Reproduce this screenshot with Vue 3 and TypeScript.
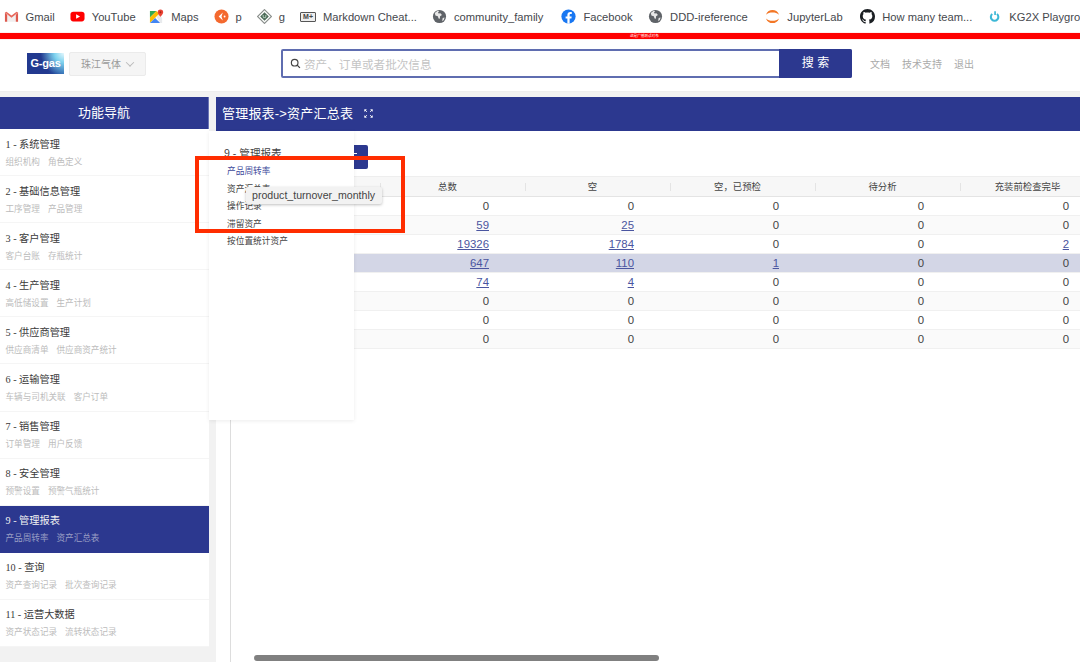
<script setup lang="ts">
interface Bookmark {
  label: string;
  icon: string;
}

interface NavItem {
  title: string;
  subs: string[];
  active?: boolean;
}

type Cell = number | { link: number };

const bookmarks: Bookmark[] = [
  { label: 'Gmail', icon: 'gmail' },
  { label: 'YouTube', icon: 'youtube' },
  { label: 'Maps', icon: 'maps' },
  { label: 'p', icon: 'orange' },
  { label: 'g', icon: 'diamond' },
  { label: 'Markdown Cheat...', icon: 'markdown' },
  { label: 'community_family', icon: 'globe' },
  { label: 'Facebook', icon: 'facebook' },
  { label: 'DDD-ireference', icon: 'globe' },
  { label: 'JupyterLab', icon: 'jupyter' },
  { label: 'How many team...', icon: 'github' },
  { label: 'KG2X Playground', icon: 'ring' }
];

const navItems: NavItem[] = [
  { title: '1 - 系统管理', subs: ['组织机构', '角色定义'] },
  { title: '2 - 基础信息管理', subs: ['工序管理', '产品管理'] },
  { title: '3 - 客户管理', subs: ['客户台账', '存瓶统计'] },
  { title: '4 - 生产管理', subs: ['高低储设置', '生产计划'] },
  { title: '5 - 供应商管理', subs: ['供应商清单', '供应商资产统计'] },
  { title: '6 - 运输管理', subs: ['车辆与司机关联', '客户订单'] },
  { title: '7 - 销售管理', subs: ['订单管理', '用户反馈'] },
  { title: '8 - 安全管理', subs: ['预警设置', '预警气瓶统计'] },
  { title: '9 - 管理报表', subs: ['产品周转率', '资产汇总表'], active: true },
  { title: '10 - 查询', subs: ['资产查询记录', '批次查询记录'] },
  { title: '11 - 运营大数据', subs: ['资产状态记录', '流转状态记录'] }
];

const popupLinks = ['产品周转率', '资产汇总表', '操作记录', '滞留资产', '按位置统计资产'];

const columns = ['总数', '空', '空，已预检', '待分析', '充装前检查完毕'];

const rows: Cell[][] = [
  [0, 0, 0, 0, 0],
  [{ link: 59 }, { link: 25 }, 0, 0, 0],
  [{ link: 19326 }, { link: 1784 }, 0, 0, { link: 2 }],
  [{ link: 647 }, { link: 110 }, { link: 1 }, 0, 0],
  [{ link: 74 }, { link: 4 }, 0, 0, 0],
  [0, 0, 0, 0, 0],
  [0, 0, 0, 0, 0],
  [0, 0, 0, 0, 0]
];

const isLink = (cell: Cell): cell is { link: number } => typeof cell !== 'number';
</script>

<template>
  <div class="page">
    <div class="bookmarks">
      <div v-for="b in bookmarks" :key="b.label" class="bookmark">
        <svg v-if="b.icon === 'gmail'" class="bm-icon" viewBox="0 0 16 16">
          <path d="M3.400 5.200 8 9l4.600-3.800v8.300H3.400z" fill="#f1eeee" />
          <path d="M1 3.800v9.700h2.400V6.200z" fill="#dd5a4e" />
          <path d="M15 3.800v9.700h-2.400V6.200z" fill="#dd5a4e" />
          <path d="M1 3.800 2.600 2.800 8 7l5.400-4.200 1.600 1L8 9.400z" fill="#e8695d" />
        </svg>
        <svg v-else-if="b.icon === 'youtube'" class="bm-icon" viewBox="0 0 16 16">
          <rect x="0.500" y="2.800" width="15" height="10.400" rx="3" fill="#f00" />
          <path d="M6.500 5.600v4.800L10.700 8z" fill="#fff" />
        </svg>
        <svg v-else-if="b.icon === 'maps'" class="bm-icon" viewBox="0 0 16 16">
          <path d="M1 2h7L1 9z" fill="#34a853" />
          <path d="M1 9 8 2l3 3-10 10z" fill="#fbbc04" />
          <path d="M1 15 6.500 9.500 12 15z" fill="#4285f4" />
          <path d="M8 8.500 12 15h2V9.500L11 5z" fill="#e8eaed" />
          <path d="M12.200.5a2.900 2.900 0 0 0-2.900 2.900c0 2 2.900 4.800 2.900 4.800s2.900-2.800 2.900-4.800A2.900 2.900 0 0 0 12.200.5z" fill="#ea4335" />
          <circle cx="12.200" cy="3.400" r="1" fill="#a52714" />
        </svg>
        <svg v-else-if="b.icon === 'orange'" class="bm-icon" viewBox="0 0 16 16">
          <circle cx="8" cy="8" r="7.500" fill="#f4692f" />
          <path d="M9.400 3.800 5 8l4.400 4.200L8 8z" fill="#fff" />
          <circle cx="11.300" cy="8" r="1" fill="#fff" />
        </svg>
        <svg v-else-if="b.icon === 'diamond'" class="bm-icon" viewBox="0 0 16 16">
          <path d="M8 .6 15.400 8 8 15.400.6 8z" fill="#fff" stroke="#8a8f8c" stroke-width="1.200" />
          <path d="M8 3.400 12.600 8 8 12.600 3.400 8z" fill="#4d6a58" />
          <circle cx="6.600" cy="7.400" r="0.800" fill="#cfe6d6" />
          <circle cx="9.400" cy="7.400" r="0.800" fill="#cfe6d6" />
          <path d="M6.400 9.200h3.200" stroke="#cfe6d6" stroke-width="0.800" />
        </svg>
        <span v-else-if="b.icon === 'markdown'" class="bm-md">M+</span>
        <svg v-else-if="b.icon === 'globe'" class="bm-icon" viewBox="0 0 16 16">
          <circle cx="8" cy="8" r="7" fill="#5f6368" />
          <path d="M6 1.800 3 4.200l.6 2.600 2.600 1 .8 2.400 1.400.2.2-2.600 2-1.400-1.600-1.800-2 .2-.6-1.200 1.400-.8z" fill="#e8e8e8" />
          <path d="M11.400 9.600 13.400 9l-.8 2.800-1.800 1.200z" fill="#e8e8e8" />
        </svg>
        <svg v-else-if="b.icon === 'facebook'" class="bm-icon" viewBox="0 0 16 16">
          <circle cx="8" cy="8" r="7.600" fill="#1877f2" />
          <path d="M9.200 15.600v-5.400h1.900l.3-2.300H9.200V6.500c0-.7.3-1.200 1.200-1.200h1.100v-2a12 12 0 0 0-1.700-.1c-1.800 0-3 1.100-3 3.100v1.600H4.900v2.300h1.900v5.400z" fill="#fff" />
        </svg>
        <svg v-else-if="b.icon === 'jupyter'" class="bm-icon" viewBox="0 0 16 16">
          <path d="M1 6C2.400 2.400 5 1 8 1s5.600 1.400 7 5C13.200 4.200 10.800 3.600 8 3.600S2.800 4.200 1 6z" fill="#f37726" />
          <path d="M1 10c1.400 3.600 4 5 7 5s5.600-1.400 7-5c-1.800 1.800-4.200 2.400-7 2.400S2.800 11.800 1 10z" fill="#f37726" />
        </svg>
        <svg v-else-if="b.icon === 'github'" class="bm-icon" viewBox="0 0 16 16">
          <path d="M8 0C3.580 0 0 3.580 0 8c0 3.540 2.290 6.530 5.470 7.590.4.070.55-.17.55-.38 0-.19-.01-.82-.01-1.490-2.010.37-2.530-.49-2.690-.94-.09-.23-.48-.94-.82-1.130-.28-.15-.68-.52-.01-.53.63-.01 1.080.58 1.230.82.72 1.210 1.870.87 2.330.66.07-.52.28-.87.51-1.070-1.780-.2-3.640-.89-3.640-3.950 0-.87.31-1.590.82-2.150-.08-.2-.36-1.020.08-2.120 0 0 .67-.21 2.200.82.64-.18 1.320-.27 2-.27.68 0 1.360.09 2 .27 1.530-1.040 2.200-.82 2.200-.82.44 1.100.16 1.920.08 2.120.51.56.82 1.270.82 2.150 0 3.070-1.870 3.750-3.650 3.950.29.25.54.73.54 1.480 0 1.070-.01 1.930-.01 2.200 0 .21.15.46.55.38A8.013 8.013 0 0016 8c0-4.420-3.580-8-8-8z" fill="#1b1f23" />
        </svg>
        <svg v-else class="bm-icon" viewBox="0 0 16 16">
          <path d="M5.600 5.400a4 4 0 1 0 5 0" fill="none" stroke="#3db8d6" stroke-width="2.200" />
          <path d="M8.600 2.500v4" stroke="#3db8d6" stroke-width="1.800" />
        </svg>
        <span>{{ b.label }}</span>
      </div>
    </div>

    <div class="notice"><span>这是广播测试对象</span></div>

    <header class="topbar">
      <div class="logo">G-gas</div>
      <div class="company">珠江气体<span class="chevron"></span></div>
      <div class="search">
        <div class="search-field">
          <svg class="search-icon" viewBox="0 0 16 16">
            <circle cx="6.800" cy="6.800" r="4.800" fill="none" stroke="#444" stroke-width="1.700" />
            <path d="m10.400 10.400 4 4" stroke="#444" stroke-width="1.900" />
          </svg>
          <span>资产、订单或者批次信息</span>
        </div>
        <div class="search-btn">搜 索</div>
      </div>
      <nav class="toplinks">
        <span>文档</span>
        <span>技术支持</span>
        <span>退出</span>
      </nav>
    </header>

    <div class="workspace">
      <aside class="sidebar">
        <div class="side-head">功能导航</div>
        <div v-for="item in navItems" :key="item.title" class="nav-item" :class="{ active: item.active }">
          <div class="nav-title">{{ item.title }}</div>
          <div class="nav-subs">
            <span v-for="s in item.subs" :key="s">{{ s }}</span>
          </div>
        </div>
      </aside>

      <main class="main">
        <div class="main-head">
          <span>管理报表-&gt;资产汇总表</span>
          <svg class="expand" viewBox="0 0 10 10">
            <path d="M.8 2.800V.8h2M.8.8l2.400 2.400M9.200 2.800V.8h-2M9.200.8 6.800 3.200M.8 7.200v2h2M.8 9.200l2.400-2.400M9.200 7.200v2h-2M9.200 9.200 6.800 6.800" fill="none" stroke="#fff" stroke-width="1" />
          </svg>
        </div>
        <div class="main-body">
          <div class="toolbar">
            <div class="tool-btn"><i></i></div>
          </div>
          <table class="report">
            <colgroup>
              <col class="col-first" />
              <col v-for="c in columns" :key="c" class="col-data" />
            </colgroup>
            <thead>
              <tr>
                <th></th>
                <th v-for="c in columns" :key="c">{{ c }}</th>
              </tr>
            </thead>
            <tbody>
              <tr v-for="(row, i) in rows" :key="i" :class="{ hover: i === 3 }">
                <td></td>
                <td v-for="(cell, j) in row" :key="j">
                  <a v-if="isLink(cell)">{{ cell.link }}</a>
                  <template v-else>{{ cell }}</template>
                </td>
              </tr>
            </tbody>
          </table>
          <div class="scrollbar"></div>
        </div>
      </main>

      <div class="popup">
        <div class="popup-title">9 - 管理报表</div>
        <div v-for="(l, i) in popupLinks" :key="l" class="popup-link" :class="{ current: i === 0 }">{{ l }}</div>
      </div>
      <div class="annotation"></div>
      <div class="tooltip">product_turnover_monthly</div>
    </div>
  </div>
</template>

<style scoped>
.page {
  width: 1080px;
  height: 662px;
  overflow: hidden;
  display: flex;
  flex-direction: column;
  font-family: "Liberation Sans", "Noto Sans CJK SC", sans-serif;
  color: #444;
}

.bookmarks {
  height: 33px;
  flex: none;
  display: flex;
  align-items: center;
  gap: 15px;
  padding-left: 3.5px;
  background: #fff;
  font-size: 11.2px;
  color: #45484d;
  white-space: nowrap;
  overflow: hidden;
}

.bookmark {
  display: flex;
  align-items: center;
  gap: 7px;
  flex: none;
}

.bookmark:nth-child(3) {
  margin-left: -1.5px;
}

.bookmark:nth-child(8) {
  margin-left: 3px;
}

.bookmark:nth-child(9) {
  margin-left: 0.5px;
}

.bookmark:nth-child(10),
.bookmark:nth-child(11) {
  margin-left: 2.5px;
}

.bm-icon {
  width: 15px;
  height: 15px;
  flex: none;
}

.bm-md {
  width: 14px;
  height: 8px;
  border: 1px solid #555;
  background: #eee;
  border-radius: 1px;
  font-size: 7px;
  font-weight: 700;
  line-height: 8px;
  text-align: center;
  box-sizing: content-box;
  color: #444;
}

.notice {
  height: 6px;
  flex: none;
  background: #f00;
  position: relative;
  box-shadow: 0 0 1px #f99;
}

.notice span {
  position: absolute;
  left: 630px;
  top: 0;
  font-size: 3.6px;
  line-height: 6px;
  color: #fff;
  white-space: nowrap;
}

.topbar {
  height: 53px;
  flex: none;
  display: flex;
  align-items: center;
  background: #fff;
  border-bottom: 1px solid #eee;
  padding: 0 0 3px 27px;
  box-sizing: border-box;
}

.logo {
  width: 37px;
  height: 21px;
  background:
    radial-gradient(circle at 100% 0, #e8f8fd 0, #7fd3ef 22%, rgba(47, 127, 196, 0) 55%),
    linear-gradient(90deg, #22398f 55%, #2a62ae);
  color: #fff;
  font-size: 11px;
  font-weight: 700;
  line-height: 20px;
  text-align: center;
  white-space: nowrap;
  letter-spacing: -0.2px;
}

.company {
  width: 77px;
  height: 24px;
  margin-left: 5px;
  display: flex;
  align-items: center;
  gap: 6px;
  padding-left: 11px;
  box-sizing: border-box;
  background: #f5f5f5;
  border: 1px solid #ebebeb;
  border-radius: 2px;
  font-size: 10px;
  color: #9a9a9a;
}

.chevron {
  width: 5px;
  height: 5px;
  border-right: 1px solid #bbb;
  border-bottom: 1px solid #bbb;
  transform: rotate(45deg) translate(-1px, -1px);
}

.search {
  width: 571px;
  height: 29px;
  margin-left: 135px;
  display: flex;
  box-sizing: border-box;
  border: 2px solid #5f6db0;
  border-radius: 2px;
}

.search-field {
  flex: 1;
  display: flex;
  align-items: center;
  gap: 3px;
  padding-left: 7px;
  font-size: 11.6px;
  color: #c4c4c4;
}

.search-icon {
  width: 11px;
  height: 11px;
}

.search-btn {
  width: 73px;
  margin: -2px -2px -2px 0;
  background: #2c388f;
  color: #fff;
  font-size: 12px;
  line-height: 29px;
  text-align: center;
  border-radius: 0 2px 2px 0;
}

.toplinks {
  display: flex;
  gap: 12px;
  margin-left: 18px;
  font-size: 10px;
  color: #aaa;
}

.workspace {
  position: relative;
  flex: 1;
  min-height: 0;
  display: flex;
  align-items: flex-start;
  gap: 7px;
  padding-top: 5px;
}

.sidebar {
  width: 209px;
  flex: none;
  background: #fff;
}

.side-head {
  height: 32px;
  background: #2c388f;
  color: #fff;
  font-size: 13px;
  line-height: 32px;
  text-align: center;
  border-right: 1px solid #6a74b4;
  box-sizing: border-box;
}

.nav-item {
  height: 47.1px;
  box-sizing: border-box;
  padding: 7.5px 5.5px 0;
  border-bottom: 1px solid #f5f5f5;
}

.nav-title {
  font-family: "Liberation Serif", "Noto Sans CJK SC", serif;
  font-size: 10.2px;
  line-height: 15px;
  color: #3a3a3a;
}

.nav-subs {
  display: flex;
  gap: 8px;
  margin-top: 3px;
  font-size: 8.6px;
  line-height: 14px;
  color: #bcbcbc;
}

.nav-item.active {
  background: #2c388f;
  border-bottom: 0;
}

.nav-item.active .nav-title {
  color: #f2f2f2;
}

.nav-item.active .nav-subs {
  color: #9a9fc4;
}

.main {
  flex: 1;
  min-width: 0;
  height: 565px;
  background: #fff;
  overflow: hidden;
}

.main-head {
  height: 34px;
  display: flex;
  align-items: center;
  gap: 11px;
  padding: 0 0 3px 6px;
  box-sizing: border-box;
  background: #2c388f;
  color: #fff;
  font-size: 13px;
  letter-spacing: 0.2px;
}

.expand {
  width: 9px;
  height: 9px;
  margin-top: 1px;
}

.main-body {
  position: relative;
  height: 531px;
  margin-left: 14px;
  border-left: 1px solid #ddd;
}

.toolbar {
  height: 45px;
  padding-top: 14px;
  box-sizing: border-box;
}

.tool-btn {
  position: relative;
  width: 68px;
  height: 24px;
  margin-left: 69px;
  background: #2c388f;
  border-radius: 2px;
}

.tool-btn i {
  position: absolute;
  right: 11px;
  top: 8px;
  width: 5px;
  height: 1px;
  background: #fff;
}

.report {
  width: 873px;
  border-collapse: collapse;
  table-layout: fixed;
  font-size: 11.4px;
}

.col-first {
  width: 148px;
}

.col-data {
  width: 145px;
}

.report th {
  position: relative;
  height: 20px;
  padding: 0 8px 1px 0;
  box-sizing: border-box;
  background: #f7f7f7;
  border-top: 1px solid #eee;
  border-bottom: 1px solid #e4e4e4;
  font-size: 9.4px;
  font-weight: 400;
  color: #444;
  text-align: center;
  white-space: nowrap;
}

.report th::after {
  content: "";
  position: absolute;
  z-index: 1;
  right: -2px;
  top: 6px;
  width: 1px;
  height: 8px;
  background: #e4e4e4;
}

.report td {
  height: 19px;
  box-sizing: border-box;
  padding: 0 35px 0 0;
  border-bottom: 1px solid #f0f0f0;
  text-align: right;
  color: #444;
}

.report tbody tr:nth-child(even) td {
  background: #fafafa;
}

.report tbody tr.hover td {
  background: #d3d6e6;
}

.report a {
  color: #4a55a0;
  text-decoration: underline;
}

.scrollbar {
  position: absolute;
  left: 23px;
  bottom: 1px;
  width: 405px;
  height: 6px;
  border-radius: 3px;
  background: #808080;
}

.popup {
  position: absolute;
  z-index: 2;
  left: 209px;
  top: 39px;
  width: 145px;
  height: 289px;
  box-sizing: border-box;
  padding: 14px 0 0 15px;
  background: #fff;
  box-shadow: 0 1px 4px rgba(0, 0, 0, 0.08);
}

.popup-title {
  font-size: 10.6px;
  line-height: 16px;
  margin-bottom: 2px;
  color: #444;
}

.popup-link {
  padding-left: 3px;
  font-size: 8.7px;
  line-height: 17.5px;
  color: #444;
}

.popup-link.current {
  color: #3e4a9b;
}

.annotation {
  position: absolute;
  z-index: 3;
  left: 195px;
  top: 64px;
  width: 210px;
  height: 77px;
  box-sizing: border-box;
  border: 4.5px solid #ff2d00;
}

.tooltip {
  position: absolute;
  z-index: 4;
  left: 246px;
  top: 95px;
  width: 136px;
  height: 17px;
  box-sizing: border-box;
  padding-left: 6px;
  background: #f2f2f2;
  border-radius: 2px;
  box-shadow: 0 1px 3px rgba(0, 0, 0, 0.25);
  font-size: 10.6px;
  line-height: 17px;
  color: #444;
  white-space: nowrap;
}
</style>

<style>
html,
body {
  margin: 0;
  background: #f2f2f2;
  overflow: hidden;
}
</style>
